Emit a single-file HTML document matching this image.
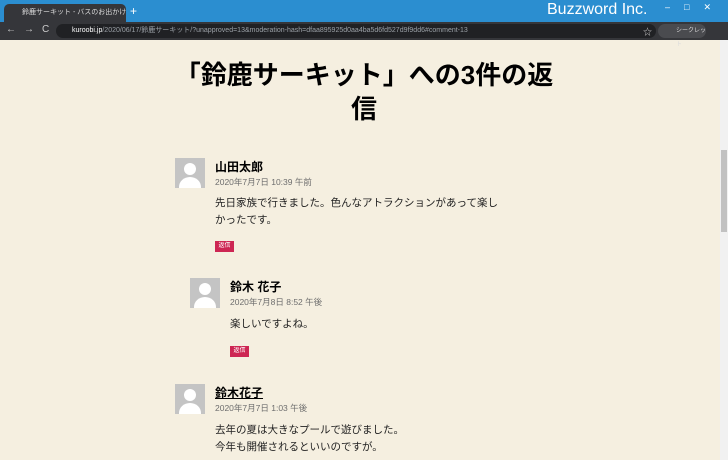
<html><head><style>
body{margin:0;width:728px;height:460px;overflow:hidden;background:#f5efe0;font-family:"Liberation Sans","Noto Sans CJK JP",sans-serif;position:relative}
.tb{position:absolute;left:0;top:0;width:728px;height:22px;background:#2b8ed0}
.tab{position:absolute;left:4px;top:4px;width:122px;height:18px;background:#35363a;border-radius:5px 5px 0 0;color:#ddd;font-size:7px;line-height:18px;padding-left:18px;box-sizing:border-box;white-space:nowrap;overflow:hidden}
.ab{position:absolute;left:0;top:22px;width:728px;height:18px;background:#35363a}
.url{position:absolute;left:56px;top:24px;width:600px;height:14px;background:#202124;border-radius:7px;color:#9aa0a6;font-size:7px;line-height:14px;padding-left:16px;box-sizing:border-box}
.av{position:absolute;width:30px;height:30px;background:#c4c4c4;overflow:hidden}
.av:before{content:"";position:absolute;left:9px;top:5px;width:12px;height:12px;border-radius:50%;background:#fff}
.av:after{content:"";position:absolute;left:4px;top:19px;width:22px;height:20px;border-radius:50%;background:#fff}
.n{position:absolute;font-size:12px;font-weight:bold;color:#000}
.d{position:absolute;font-size:8.5px;color:#6d6d6d}
.t{position:absolute;font-size:10.5px;color:#222;line-height:17px}
.r{position:absolute;width:19px;height:11px;background:#cd2653;color:#fff;font-size:6px;line-height:11px;text-align:center}
</style></head><body>
<div class="tb"></div>
<div class="tab">鈴鹿サーキット - バスのお出かけブログ ✕</div>
<div style="position:absolute;left:130px;top:4px;color:#fff;font-size:12px">+</div>
<div style="position:absolute;left:547px;top:1px;color:#fff;font-size:16px">Buzzword Inc.</div>
<div style="position:absolute;left:665px;top:2px;color:#fff;font-size:9px;letter-spacing:14px">‒□✕</div>
<div class="ab"></div>
<div style="position:absolute;left:6px;top:24px;color:#ccc;font-size:10px;letter-spacing:8px">←→C</div>
<div class="url"><span style="color:#fff">kuroobi.jp</span>/2020/06/17/鈴鹿サーキット/?unapproved=13&amp;moderation-hash=dfaa895925d0aa4ba5d6fd527d9f9dd6#comment-13</div>
<div style="position:absolute;left:643px;top:25px;color:#ccc;font-size:9px">☆</div>
<div style="position:absolute;left:658px;top:24px;width:48px;height:14px;background:#4a4b4f;border-radius:7px;color:#ddd;font-size:6px;line-height:14px;padding-left:18px;box-sizing:border-box">シークレット</div>
<div style="position:absolute;left:720px;top:40px;width:8px;height:420px;background:#f1f1f1"></div>
<div style="position:absolute;left:721px;top:150px;width:6px;height:82px;background:#c1c1c1"></div>
<div style="position:absolute;left:140px;top:58px;width:448px;text-align:center;font-size:26px;font-weight:bold;line-height:34px;color:#000">「鈴鹿サーキット」への3件の返<br>信</div>
<div class="av" style="left:175px;top:158px"></div>
<div class="n" style="left:215px;top:158px">山田太郎</div>
<div class="d" style="left:215px;top:176px">2020年7月7日 10:39 午前</div>
<div class="t" style="left:215px;top:195px;width:300px">先日家族で行きました。色んなアトラクションがあって楽し<br>かったです。</div>
<div class="r" style="left:215px;top:241px">返信</div>
<div class="av" style="left:190px;top:278px"></div>
<div class="n" style="left:230px;top:278px">鈴木 花子</div>
<div class="d" style="left:230px;top:296px">2020年7月8日 8:52 午後</div>
<div class="t" style="left:230px;top:316px">楽しいですよね。</div>
<div class="r" style="left:230px;top:346px">返信</div>
<div class="av" style="left:175px;top:384px"></div>
<div class="n" style="left:215px;top:384px;text-decoration:underline">鈴木花子</div>
<div class="d" style="left:215px;top:402px">2020年7月7日 1:03 午後</div>
<div class="t" style="left:215px;top:422px">去年の夏は大きなプールで遊びました。<br>今年も開催されるといいのですが。</div>
</body></html>
